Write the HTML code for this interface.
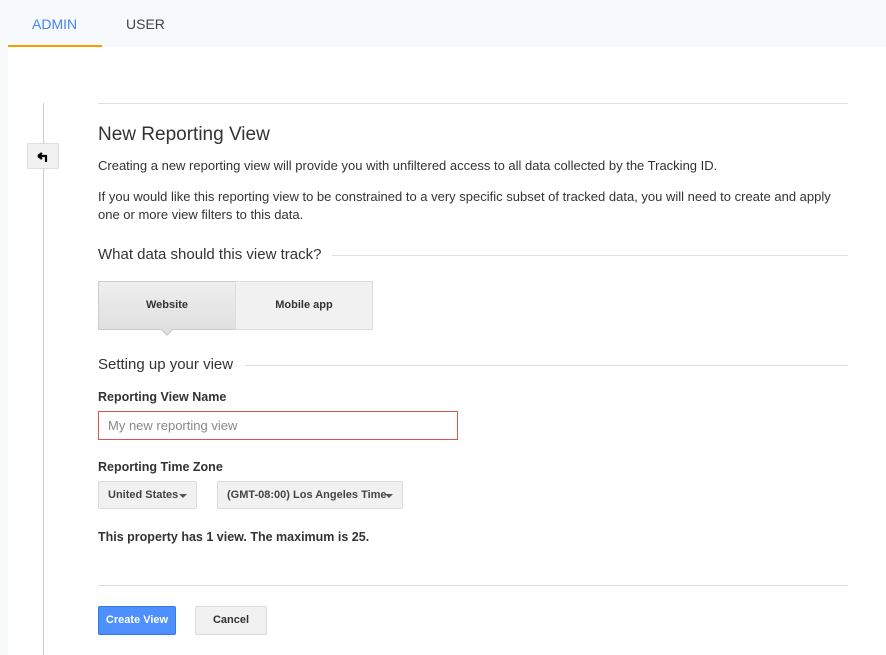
<!DOCTYPE html>
<html><head><style>
*{margin:0;padding:0;box-sizing:border-box}
body{width:886px;height:655px;background:#f8f9fa;font-family:"Liberation Sans",Arial,sans-serif;position:relative;overflow:hidden;color:#212121}
.a{position:absolute}
.tab{font-size:14px;top:16px}
.main{left:8px;top:47px;width:878px;height:608px;background:#fff}
.hr{height:1px;background:#ddd}
p.t{font-size:13px;color:#333;line-height:18px}
.lbl{font-size:12.5px;font-weight:bold;color:#333}
.sel{height:28px;background:#f1f1f1;border:1px solid #dcdcdc;border-radius:2px;font-size:11px;font-weight:bold;color:#444;padding:0 9px;line-height:26px}
.sel i{position:absolute;right:9px;top:12px;border:4px solid transparent;border-top:4px solid #555;width:0;height:0}
</style></head><body>
<div class="a tab" style="left:32px;color:#4285f4">ADMIN</div>
<div class="a tab" style="left:126px;color:#444">USER</div>
<div class="a" style="left:8px;top:45px;width:94px;height:3px;background:#f99a00"></div>
<div class="a main"></div>
<div class="a" style="left:43px;top:103px;width:1px;height:552px;background:#ccc"></div>
<div class="a" style="left:27px;top:143px;width:32px;height:26px;background:#f1f1f1;border:1px solid #ddd;border-radius:2px;text-align:center;font-size:15px;font-weight:bold;line-height:22px">&#8629;</div>
<div class="a" style="left:27px;top:143px;width:32px;height:26px;background:#f1f1f1;border:1px solid #ddd;border-radius:2px"><svg width="32" height="26" viewBox="0 0 32 26"><path d="M10 12h8v6M10 12l4-3M10 12l4 3" stroke="#000" stroke-width="2.2" fill="none"/></svg></div>
<div class="a hr" style="left:98px;top:103px;width:750px"></div>
<div class="a" style="left:98px;top:124px;font-size:19px;color:#333">New Reporting View</div>
<p class="a t" style="left:98px;top:157px">Creating a new reporting view will provide you with unfiltered access to all data collected by the Tracking ID.</p>
<p class="a t" style="left:98px;top:188px;width:750px">If you would like this reporting view to be constrained to a very specific subset of tracked data, you will need to create and apply one or more view filters to this data.</p>
<div class="a" style="left:98px;top:246px;font-size:15px;color:#333">What data should this view track?</div>
<div class="a hr" style="left:332px;top:255px;width:516px"></div>
<div class="a" style="left:98px;top:281px;width:138px;height:49px;background:linear-gradient(#eee,#e0e0e0);border:1px solid #ccc;font-size:11px;font-weight:bold;text-align:center;line-height:47px;color:#333">Website</div>
<div class="a" style="left:235px;top:281px;width:138px;height:49px;background:#f1f1f1;border:1px solid #ddd;font-size:11px;font-weight:bold;text-align:center;line-height:47px;color:#333">Mobile app</div>
<div class="a" style="left:160px;top:329px;width:0;height:0;border:7px solid transparent;border-top:7px solid #ccc"></div>
<div class="a" style="left:161px;top:328px;width:0;height:0;border:6px solid transparent;border-top:6px solid #e0e0e0"></div>
<div class="a" style="left:98px;top:356px;font-size:15px;color:#333">Setting up your view</div>
<div class="a hr" style="left:245px;top:365px;width:603px"></div>
<div class="a lbl" style="left:98px;top:390px">Reporting View Name</div>
<div class="a" style="left:98px;top:411px;width:360px;height:29px;border:1px solid #d9534f;font-size:13px;color:#888;padding-left:9px;line-height:27px">My new reporting view</div>
<div class="a lbl" style="left:98px;top:460px">Reporting Time Zone</div>
<div class="a sel" style="left:98px;top:481px;width:99px">United States<i></i></div>
<div class="a sel" style="left:217px;top:481px;width:186px">(GMT-08:00) Los Angeles Time<i></i></div>
<div class="a lbl" style="left:98px;top:530px">This property has 1 view. The maximum is 25.</div>
<div class="a hr" style="left:98px;top:585px;width:750px"></div>
<div class="a" style="left:98px;top:606px;width:78px;height:29px;background:#4d90fe;border:1px solid #3079ed;border-radius:2px;color:#fff;font-size:11px;font-weight:bold;text-align:center;line-height:27px">Create View</div>
<div class="a" style="left:195px;top:606px;width:72px;height:29px;background:#f1f1f1;border:1px solid #ddd;border-radius:2px;color:#333;font-size:11px;font-weight:bold;text-align:center;line-height:27px">Cancel</div>
</body></html>
